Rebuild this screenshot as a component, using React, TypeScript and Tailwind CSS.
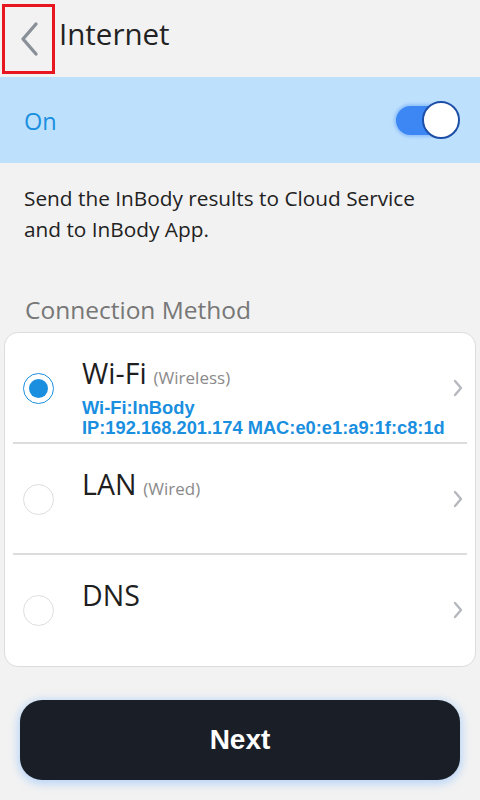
import React from "react";

function Chevron() {
  return (
    <svg width="12" height="20" viewBox="0 0 12 20" className="shrink-0">
      <path d="M3 3 L9 10 L3 17" fill="none" stroke="#b5b8bd" strokeWidth="2.4" strokeLinecap="round" strokeLinejoin="round" />
    </svg>
  );
}

function Row({
  selected,
  title,
  sub,
  info,
  last,
}: {
  selected?: boolean;
  title: string;
  sub?: string;
  info?: string[];
  last?: boolean;
}) {
  return (
    <div className={`h-[111px] mx-2 flex items-start ${last ? "" : "border-b-2 border-[#dcdcdc]"}`}>
      <div className="w-[69px] pl-[10px] pt-[40px] shrink-0">
        {selected ? (
          <div className="w-[31px] h-[31px] rounded-full border border-[#1a8fe0] flex items-center justify-center">
            <div className="w-[19px] h-[19px] rounded-full bg-[#1a8fe0]" />
          </div>
        ) : (
          <div className="w-[31px] h-[31px] rounded-full border border-[#dedede]" />
        )}
      </div>
      <div className="flex-1 pt-[22px]">
        <div className="flex items-baseline gap-[7px]">
          <span className="text-[28.5px] leading-[36px] text-[#1e1e1e]">{title}</span>
          {sub && <span className="text-[17px] text-[#8a8a8a]">{sub}</span>}
        </div>
        {info && (
          <div
            className="mt-[7px] text-[18.3px] leading-[20px] font-bold text-[#1a8fe0]"
            style={{ fontFamily: '"Liberation Sans", Arial, sans-serif' }}
          >
            {info.map((l) => (
              <div key={l}>{l}</div>
            ))}
          </div>
        )}
      </div>
      <div className="pt-[45px] pr-[3px]">
        <Chevron />
      </div>
    </div>
  );
}

export default function App() {
  return (
    <div
      className="w-[480px] h-[800px] bg-[#f2f2f2] flex flex-col overflow-hidden"
      style={{ fontFamily: '"Open Sans", "Noto Sans", sans-serif' }}
    >
      {/* Header */}
      <div className="h-[77px] flex items-center">
        <div className="ml-[2px] w-[53px] h-[70px] border-[3px] border-[#e8161f] flex items-center justify-center">
          <svg width="24" height="36" viewBox="0 0 24 36">
            <path d="M19 3 L6 18 L19 33" fill="none" stroke="#8a9097" strokeWidth="3.4" strokeLinecap="round" strokeLinejoin="round" />
          </svg>
        </div>
        <span className="ml-[4px] text-[29.5px] text-[#222] leading-none pb-[10px]">Internet</span>
      </div>

      {/* On band */}
      <div className="h-[86px] bg-[#bde0fd] flex items-center justify-between pl-[24px] pr-[20px]">
        <span className="text-[23.5px] text-[#1a8fe0] pt-[4px]">On</span>
        <div className="relative w-[64px] h-[38px] flex items-center">
          <div className="w-[48px] h-[29px] rounded-full bg-[#3d87f5] shadow-[0_0_3px_2px_rgba(61,135,245,0.35)]" />
          <div className="absolute right-0 top-0 w-[38px] h-[38px] rounded-full bg-white border-2 border-[#1e4fa8]" />
        </div>
      </div>

      {/* Description */}
      <div className="px-[24px] pt-[20px] text-[20.8px] leading-[31px] text-[#222]">
        Send the InBody results to Cloud Service
        <br />
        and to InBody App.
      </div>

      <div className="px-[25px] mt-[50px] text-[24.5px] leading-[30px] text-[#777]">Connection Method</div>

      {/* Card */}
      <div className="mx-[4px] mt-[7px] bg-white rounded-[14px] border border-[#dcdcdc]">
        <Row
          selected
          title="Wi-Fi"
          sub="(Wireless)"
          info={["Wi-Fi:InBody", "IP:192.168.201.174 MAC:e0:e1:a9:1f:c8:1d"]}
        />
        <Row title="LAN" sub="(Wired)" />
        <Row title="DNS" last />
      </div>

      {/* Next */}
      <div className="px-[20px] mt-[33px]">
        <button
          className="w-full h-[80px] rounded-[22px] bg-[#1a1f27] text-white text-[28px] font-bold shadow-[0_2px_8px_2px_rgba(120,180,255,0.45)]"
          style={{ fontFamily: '"Liberation Sans", Arial, sans-serif' }}
        >
          Next
        </button>
      </div>
    </div>
  );
}
